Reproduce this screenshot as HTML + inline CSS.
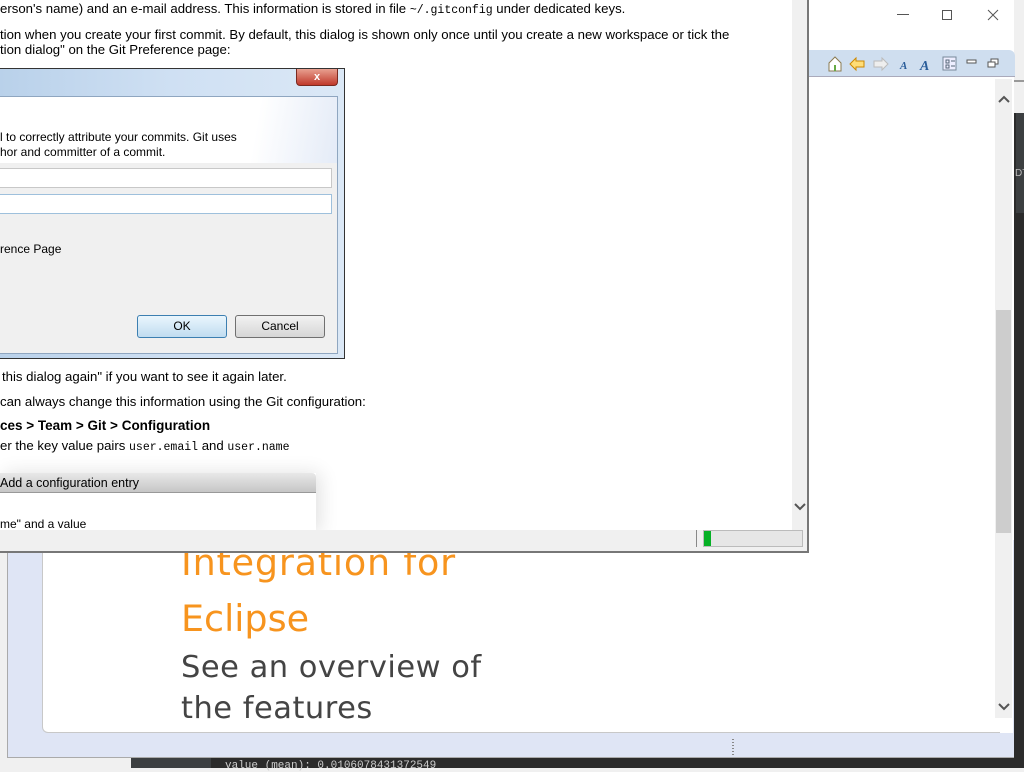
<!DOCTYPE html>
<html><head><meta charset="utf-8"><style>
*{margin:0;padding:0;box-sizing:border-box}
body{width:1024px;height:768px;overflow:hidden;position:relative;background:#f0f0f0;font-family:"Liberation Sans",Arial,sans-serif}
.abs{position:absolute}
.t{font-size:13.2px;color:#000;white-space:nowrap}
.mono{font-family:"Liberation Mono",monospace;font-size:11.5px}
.seg{font-family:"Liberation Sans",sans-serif;font-size:12px;color:#000;white-space:nowrap}
</style></head><body>
<div class="abs" style="left:1012px;top:0;width:12px;height:768px;background:#2b2b2b"></div>
<div class="abs" style="left:1012px;top:0;width:12px;height:113px;background:#f0f0f0"></div>
<div class="abs" style="left:1012px;top:80px;width:12px;height:2px;background:#999"></div>
<div class="abs" style="left:1016px;top:113px;width:8px;height:100px;background:#3c3f41"></div>
<div class="abs" style="left:1015px;top:168px;font-size:10px;color:#bbb">DT</div>
<div class="abs" style="left:131px;top:758px;width:893px;height:10px;background:#2b2b2b"></div>
<div class="abs" style="left:131px;top:758px;width:80px;height:10px;background:#3c3f41"></div>
<div class="abs mono" style="left:225px;top:760px;color:#ccc;font-size:11px">value (mean): 0.0106078431372549</div>
<div class="abs" style="left:808px;top:0;width:206px;height:758px;background:#fff"></div>
<div class="abs" style="left:7px;top:540px;width:1007px;height:218px;background:#dfe5f5;border-left:1px solid #aaa;border-bottom:1px solid #aaa"></div>
<div class="abs" style="left:808px;top:50px;width:207px;height:27px;background:#cfdeef;border-bottom:1px solid #aab;border-top-right-radius:6px"></div>
<div class="abs" style="left:808px;top:77px;width:205px;height:656px;background:#fff"></div>
<div class="abs" style="left:42px;top:540px;width:958px;height:193px;background:#fff;border-bottom:1px solid #c8c8c8;border-left:1px solid #c8c8c8;border-bottom-left-radius:6px"></div>
<div class="abs" style="left:995px;top:79px;width:17px;height:639px;background:#f0f0f0"></div>
<div class="abs" style="left:996px;top:310px;width:15px;height:223px;background:#cdcdcd"></div>
<svg class="abs" style="left:996px;top:92px" width="16" height="14"><path d="M3 10l5-5 5 5" stroke="#555" stroke-width="2" fill="none"/></svg>
<svg class="abs" style="left:996px;top:700px" width="16" height="14"><path d="M3 4l5 5 5-5" stroke="#555" stroke-width="2" fill="none"/></svg>
<div class="abs" style="left:897px;top:14px;width:12px;height:1px;background:#555"></div>
<div class="abs" style="left:942px;top:10px;width:10px;height:10px;border:1px solid #555"></div>
<svg class="abs" style="left:987px;top:9px" width="12" height="12"><path d="M1 1L11 11M11 1L1 11" stroke="#555" stroke-width="1"/></svg>
<svg class="abs" style="left:826px;top:55px" width="180" height="18">
<path d="M3 8L9 2L15 8V16H3Z" fill="#fff" stroke="#8a7a50"/><rect x="8" y="10" width="2" height="6" fill="#6a4"/>
<path d="M24 9L30 3V6H38V12H30V15Z" fill="#fd7" stroke="#c80"/>
<path d="M62 9L56 3V6H48V12H56V15Z" fill="#eee" stroke="#bbb"/>
<text x="74" y="14" font-family="Liberation Serif" font-style="italic" font-weight="bold" font-size="11" fill="#2a5d9a">A</text>
<text x="94" y="15" font-family="Liberation Serif" font-style="italic" font-weight="bold" font-size="14" fill="#2a5d9a">A</text>
<rect x="117" y="2" width="13" height="13" fill="#eef" stroke="#789"/><path d="M120 5h3v3h-3zM120 10h3v3h-3zM125 6h4M125 11h4" stroke="#567" fill="none"/>
<rect x="141" y="5" width="9" height="3" fill="#fff" stroke="#555"/>
<rect x="165" y="4" width="7" height="5" fill="#fff" stroke="#555"/><rect x="162" y="7" width="7" height="5" fill="#fff" stroke="#555"/>
</svg>
<div class="abs" style="left:181px;top:541px;font-family:'DejaVu Sans',sans-serif;font-size:36.5px;letter-spacing:0.8px;color:#f7941e;white-space:nowrap">Integration for</div>
<div class="abs" style="left:181px;top:597px;font-family:'DejaVu Sans',sans-serif;font-size:36.5px;color:#f7941e">Eclipse</div>
<div class="abs" style="left:181px;top:647px;font-family:'DejaVu Sans',sans-serif;font-size:30.5px;letter-spacing:0.5px;color:#444;line-height:41px;white-space:nowrap">See an overview of<br>the features</div>
<div class="abs" style="left:0;top:0;width:809px;height:553px;background:#fff;border-right:2px solid #777;border-bottom:2px solid #777;overflow:hidden">
 <div class="abs t" style="left:0;top:1px">erson's name) and an e-mail address. This information is stored in file <span class="mono">~/.gitconfig</span> under dedicated keys.</div>
 <div class="abs t" style="left:0;top:27px">tion when you create your first commit. By default, this dialog is shown only once until you create a new workspace or tick the</div>
 <div class="abs t" style="left:0;top:42px">tion dialog" on the Git Preference page:</div>
 <div class="abs" style="left:0;top:68px;width:345px;height:291px;background:linear-gradient(90deg,#b9d1ea,#cfe0f3 50%,#dbe8f6);border:1px solid #333;border-left:none">
  <div class="abs" style="left:296px;top:0;width:42px;height:17px;background:linear-gradient(#e8a090,#c0392b);border:1px solid #7a2a20;border-top:none;border-radius:0 0 4px 4px;color:#fff;font-size:11px;font-weight:bold;text-align:center;line-height:16px">x</div>
  <div class="abs" style="left:0;top:27px;width:338px;height:258px;background:#f0f0f0;border:1px solid #8fa6c0;border-left:none">
   <div class="abs" style="left:0;top:0;width:337px;height:66px;background:linear-gradient(100deg,#fff 75%,#e4ebf7)"></div>
   <div class="abs seg" style="left:0;top:33px">l to correctly attribute your commits. Git uses</div>
   <div class="abs seg" style="left:0;top:48px">hor and committer of a commit.</div>
   <div class="abs" style="left:0;top:71px;width:332px;height:20px;background:#fff;border:1px solid #c8c8c8;border-left:none"></div>
   <div class="abs" style="left:0;top:97px;width:332px;height:20px;background:#fff;border:1px solid #9ec0dc;border-left:none"></div>
   <div class="abs seg" style="left:0;top:145px">rence Page</div>
   <div class="abs seg" style="left:137px;top:218px;width:90px;height:23px;border:1px solid #3c7fb1;border-radius:3px;background:linear-gradient(#eaf6fd,#c0dcf0);text-align:center;line-height:21px">OK</div>
   <div class="abs seg" style="left:235px;top:218px;width:90px;height:23px;border:1px solid #707070;border-radius:3px;background:linear-gradient(#f2f2f2,#d6d6d6);text-align:center;line-height:21px">Cancel</div>
  </div>
 </div>
 <div class="abs t" style="left:2px;top:369px">this dialog again" if you want to see it again later.</div>
 <div class="abs t" style="left:0;top:394px">can always change this information using the Git configuration:</div>
 <div class="abs" style="left:0;top:418px;font-size:13.5px;font-weight:bold;white-space:nowrap">ces &gt; Team &gt; Git &gt; Configuration</div>
 <div class="abs t" style="left:0;top:438px">er the key value pairs <span class="mono">user.email</span> and <span class="mono">user.name</span></div>
 <div class="abs" style="left:0;top:473px;width:316px;height:60px;background:#fff;box-shadow:4px 0 18px rgba(0,0,0,.12)">
  <div class="abs seg" style="left:0;top:0;width:316px;height:20px;background:linear-gradient(#e8e8e8,#c6c6c6);border-bottom:1px solid #999;border-radius:0 4px 0 0;font-size:12.5px;line-height:20px">Add a configuration entry</div>
  <div class="abs seg" style="left:0;top:44px">me" and a value</div>
 </div>
 <div class="abs" style="left:792px;top:0;width:15px;height:530px;background:#f0f0f0"></div>
 <svg class="abs" style="left:792px;top:500px" width="16" height="14"><path d="M3 4l5 5 5-5" stroke="#555" stroke-width="2" fill="none"/></svg>
 <div class="abs" style="left:0;top:530px;width:807px;height:21px;background:#f0f0f0"></div>
 <div class="abs" style="left:696px;top:530px;width:1px;height:17px;background:#888"></div>
 <div class="abs" style="left:703px;top:530px;width:100px;height:17px;background:#e6e6e6;border:1px solid #bbb"></div>
 <div class="abs" style="left:704px;top:531px;width:7px;height:15px;background:#06b025"></div>
</div>
<div class="abs" style="left:732px;top:739px;width:2px;height:16px;background:repeating-linear-gradient(#888 0 1px,transparent 1px 3px)"></div>
</body></html>
